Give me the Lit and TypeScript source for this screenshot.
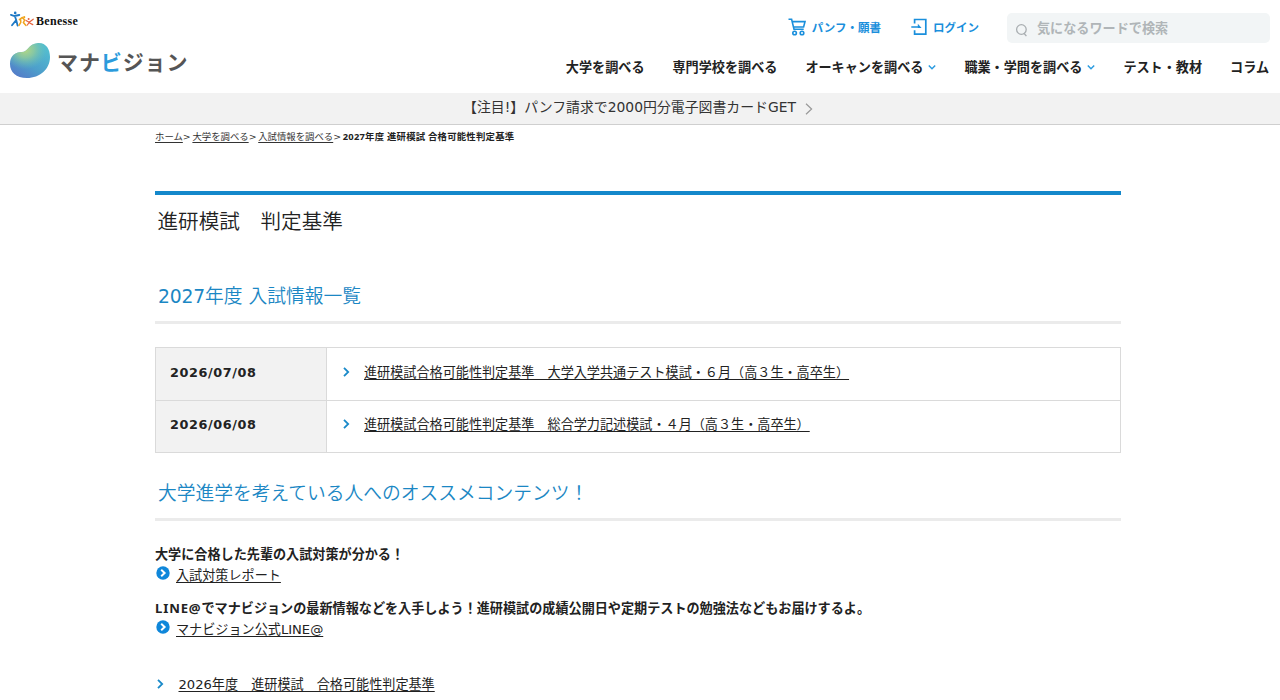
import { LitElement, html, css, svg } from "lit";
import { customElement } from "lit/decorators.js";

const chevron = (cls: string) => html`<svg class=${cls} viewBox="0 0 8 12" width="8" height="12">
  <path d="M2 1.8 L6.2 6 L2 10.2" fill="none" stroke="currentColor" stroke-width="1.8" /></svg>`;

const down = html`<svg class="down" viewBox="0 0 8 6" width="8" height="6">
  <path d="M0.8 1.5 L4 4.7 L7.2 1.5" fill="none" stroke="#2a9be0" stroke-width="1.5" /></svg>`;

const disc = html`<svg class="disc" viewBox="0 0 14 14" width="14" height="14">
  <circle cx="7" cy="7" r="6.7" fill="#0f87da" />
  <path d="M5.2 3.8 L8.6 7 L5.2 10.2" fill="none" stroke="#fff" stroke-width="2" /></svg>`;

const people = svg`
  <g fill="none" stroke-linecap="round">
    <path d="M0.9 3.8 L4.5 5 L9.3 4 M4.8 5 L6.2 9 L2 14.2 M6.2 9 L7.6 14.6" stroke="#1d78c4" stroke-width="1.8" />
    <path d="M9.4 8.6 L12.2 6.4 L14.6 9 L13.4 11.6 L16 14.4 M10.6 8.4 L10.8 11.4 L9 14.4" stroke="#f0a41c" stroke-width="1.5" />
    <path d="M23.2 8.2 L19.2 11.2 L16 9.4 M19.2 11.2 L17.4 14 M19.2 11.8 L22.8 13.6" stroke="#e5623c" stroke-width="1.2" />
  </g>
  <circle cx="5.2" cy="1.9" r="1.3" fill="#1d78c4" />
  <circle cx="14.2" cy="6.2" r="1.1" fill="#f0a41c" />
  <circle cx="18.6" cy="8" r="1" fill="#e5623c" />`;

const rows = [
  { date: "2026/07/08", title: "進研模試合格可能性判定基準　大学入学共通テスト模試・６月（高３生・高卒生）" },
  { date: "2026/06/08", title: "進研模試合格可能性判定基準　総合学力記述模試・４月（高３生・高卒生）" },
];

@customElement("app-root")
export class AppRoot extends LitElement {
  static styles = css`
    :host {
      display: block;
      height: 700px;
      overflow: hidden;
      background: #fff;
      color: #222;
      font-family: "DejaVu Sans", "Noto Sans CJK JP", sans-serif;
      font-size: 13.12px;
      line-height: 20px;
      white-space: nowrap;
    }
    * { box-sizing: border-box; }
    svg { display: block; flex: none; }
    a { color: inherit; text-decoration: underline; text-underline-offset: 2px; text-decoration-thickness: 1px; }
    .header { height: 93px; display: flex; justify-content: space-between; padding: 0 11px 0 10px; }
    .brand { padding-top: 11px; }
    .benesse { display: flex; height: 20px; gap: 2px; }
    .benesse-name { font: bold 12px/20px "Liberation Serif", serif; color: #111; letter-spacing: 0.3px; }
    .logo { display: flex; align-items: center; height: 40px; margin-top: 10px; }
    .word { font: 700 21px/40px "Noto Sans CJK JP", sans-serif; color: #555; margin-left: 5px; letter-spacing: 0.9px; }
    .word-accent { color: #2b9bdc; }
    .menus { display: flex; flex-direction: column; align-items: flex-end; font-family: "Noto Sans CJK JP", sans-serif; font-weight: 700; }
    .tools { display: flex; align-items: center; padding-top: 13px; height: 43px; color: #1a8fdc; font-size: 11.5px; margin-right: -1px; }
    .tool { display: flex; align-items: center; gap: 6px; padding-bottom: 2px; }
    .tool + .tool { margin-left: 30px; }
    .search { width: 263px; height: 30px; margin-left: 28px; border-radius: 5px; background: #f2f5f6; color: #b0b5b8; display: flex; align-items: center; padding-left: 8px; gap: 9px; font-size: 13.12px; }
    .search svg { margin-top: 3px; }
    .nav { display: flex; gap: 28px; padding-top: 14px; }
    .nav-item { display: flex; align-items: center; gap: 5px; }
    .notice { height: 32px; background: #f2f2f2; border-bottom: 1px solid #cfcfcf; display: flex; align-items: center; justify-content: center; gap: 9px; font-size: 13.88px; color: #333; padding: 0 4px 3px 0; }
    .notice-arrow { color: #999; margin-top: 3px; }
    .main { width: 966px; margin-left: 155px; }
    .crumbs { font-size: 9.4px; line-height: 24px; height: 66px; color: #333; display: flex; gap: 1.7px; }
    .crumb-now { font-family: "Noto Sans", "Noto Sans CJK JP", sans-serif; font-weight: 700; color: #222; letter-spacing: 0.22px; }
    .title { margin: 0; height: 76px; border-top: 4px solid #1488cb; padding: 12px 2.5px 0; font-weight: 350; font-size: 20.6px; line-height: 30px; }
    .section { margin: 0; height: 57px; border-bottom: 3px solid #ebebeb; padding: 15px 3px 0; font-weight: 350; font-size: 18.75px; line-height: 30px; color: #1b87c4; }
    .num { font-weight: 400; letter-spacing: -0.2px; }
    .table { margin: 23px 0 11px; border: 1px solid #dadada; }
    .row { display: flex; height: 52px; }
    .row + .row { border-top: 1px solid #dadada; }
    .date { width: 171px; background: #f2f2f2; border-right: 1px solid #dadada; padding: 15px 14px 0; font-weight: 700; font-size: 12.8px; letter-spacing: 0.6px; }
    .entry { display: flex; padding: 15px 0 0 15px; gap: 14px; }
    .row + .row .date, .row + .row .entry { padding-top: 14px; }
    .blue { color: #1a8ac9; margin-top: 3px; }
    .lead { margin: 0; font-family: "Noto Sans", "Noto Sans CJK JP", sans-serif; font-weight: 700; height: 20px; }
    .lead-first { margin-top: 23px; }
    .latin { letter-spacing: 0.85px; }
    .link { display: flex; gap: 6px; height: 34px; padding: 2px 0 0 1px; }
    .past { display: flex; gap: 14.5px; padding: 23px 0 0 1px; }
  `;

  render() {
    return html`
      <header class="header">
        <div class="brand">
          <div class="benesse">
            <svg viewBox="0 0 24 16" width="24" height="16">${people}</svg>
            <span class="benesse-name">Benesse</span>
          </div>
          <div class="logo">
            <svg viewBox="0 0 42 38" width="42" height="38">
              <defs>
                <linearGradient id="base" x1="0.15" y1="1" x2="0.8" y2="0.1">
                  <stop offset="0" stop-color="#5578c8" /><stop offset="0.45" stop-color="#4d9fcb" /><stop offset="1" stop-color="#52bcd0" />
                </linearGradient>
                <radialGradient id="glow" cx="0.38" cy="0.2" r="0.55">
                  <stop offset="0" stop-color="#b5d783" /><stop offset="0.4" stop-color="#9ad095" stop-opacity="0.75" /><stop offset="1" stop-color="#6cc3b4" stop-opacity="0" />
                </radialGradient>
              </defs>
              <path d="M0 22 C0 14 5 10 12 10 C18 10 18 2 28 1 C36 0.6 40 7 40 15 C40 27 30 36 17 36 C6 36 0 30 0 22Z" fill="url(#base)" />
              <path d="M0 22 C0 14 5 10 12 10 C18 10 18 2 28 1 C36 0.6 40 7 40 15 C40 27 30 36 17 36 C6 36 0 30 0 22Z" fill="url(#glow)" />
            </svg>
            <span class="word">マナ<span class="word-accent">ビ</span>ジョン</span>
          </div>
        </div>
        <div class="menus">
          <div class="tools">
            <span class="tool">
              <svg viewBox="0 0 18 18" width="18" height="18"><g fill="none" stroke="#1a8fdc" stroke-width="1.6">
                <path d="M0.5 1.2 H3.6 L6 11.3 H15.7 M4.1 3.6 H17 L15.6 9 H5.4" /><circle cx="6.6" cy="15" r="1.8" /><circle cx="14" cy="15" r="1.8" /></g></svg>
              パンフ・願書</span>
            <span class="tool">
              <svg viewBox="0 0 16 18" width="16" height="18"><g fill="none" stroke="#1a8fdc" stroke-width="1.7">
                <path d="M3.6 5.6 V1.5 H14.8 V16.2 H3.6 V12.2 M0.3 9 H8" /></g><path d="M6.8 5.8 L10.6 9.9 H6.8Z" fill="#1a8fdc" /></svg>
              ログイン</span>
            <div class="search">
              <svg viewBox="0 0 13 14" width="13" height="14"><g fill="none" stroke="#a9aeb1" stroke-width="1.3"><circle cx="6.4" cy="6.5" r="4.8" /><path d="M8.8 10 L11.4 13.2" /></g></svg>
              <span>気になるワードで検索</span>
            </div>
          </div>
          <nav class="nav">
            <span class="nav-item">大学を調べる</span>
            <span class="nav-item">専門学校を調べる</span>
            <span class="nav-item">オーキャンを調べる${down}</span>
            <span class="nav-item">職業・学問を調べる${down}</span>
            <span class="nav-item">テスト・教材</span>
            <span class="nav-item">コラム</span>
          </nav>
        </div>
      </header>
      <div class="notice"><span>【注目!】パンフ請求で2000円分電子図書カードGET</span>
        <svg class="notice-arrow" viewBox="0 0 8 12" width="8" height="12"><path d="M1 0.7 L6.6 6 L1 11.3" fill="none" stroke="currentColor" stroke-width="1.2" /></svg>
      </div>
      <main class="main">
        <div class="crumbs">
          <span><a>ホーム</a>&gt;</span><span><a>大学を調べる</a>&gt;</span><span><a>入試情報を調べる</a>&gt;</span>
          <span class="crumb-now">2027年度 進研模試 合格可能性判定基準</span>
        </div>
        <h1 class="title">進研模試　判定基準</h1>
        <h2 class="section"><span class="num">2027</span>年度 入試情報一覧</h2>
        <div class="table">
          ${rows.map((r) => html`<div class="row"><div class="date">${r.date}</div>
            <div class="entry">${chevron("blue")}<a>${r.title}</a></div></div>`)}
        </div>
        <h2 class="section">大学進学を考えている人へのオススメコンテンツ！</h2>
        <p class="lead lead-first">大学に合格した先輩の入試対策が分かる！</p>
        <div class="link">${disc}<a>入試対策レポート</a></div>
        <p class="lead"><span class="latin">LINE@</span>でマナビジョンの最新情報などを入手しよう！進研模試の成績公開日や定期テストの勉強法などもお届けするよ。</p>
        <div class="link">${disc}<a>マナビジョン公式LINE@</a></div>
        <div class="past">${chevron("blue")}<a>2026年度　進研模試　合格可能性判定基準</a></div>
      </main>
    `;
  }
}
